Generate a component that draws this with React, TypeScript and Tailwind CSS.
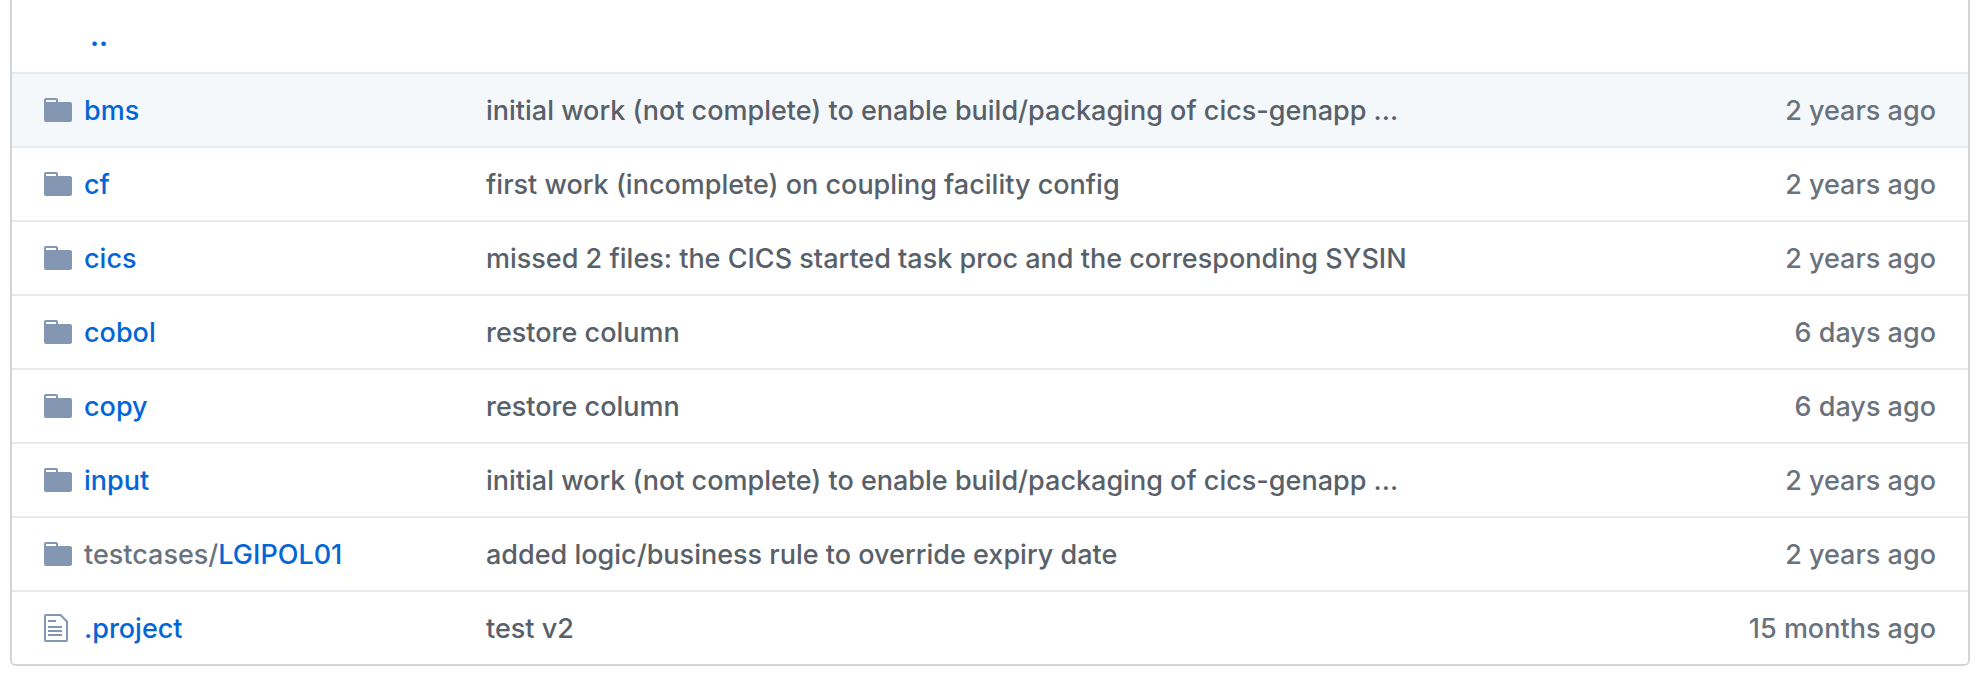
type Entry = {
  kind: 'directory' | 'file';
  name: string;
  prefix?: string;
  message: string;
  age: string;
  active?: boolean;
};

const entries: Entry[] = [
  {
    kind: 'directory',
    name: 'bms',
    message: 'initial work (not complete) to enable build/packaging of cics-genapp ...',
    age: '2 years ago',
    active: true,
  },
  {
    kind: 'directory',
    name: 'cf',
    message: 'first work (incomplete) on coupling facility config',
    age: '2 years ago',
  },
  {
    kind: 'directory',
    name: 'cics',
    message: 'missed 2 files: the CICS started task proc and the corresponding SYSIN',
    age: '2 years ago',
  },
  { kind: 'directory', name: 'cobol', message: 'restore column', age: '6 days ago' },
  { kind: 'directory', name: 'copy', message: 'restore column', age: '6 days ago' },
  {
    kind: 'directory',
    name: 'input',
    message: 'initial work (not complete) to enable build/packaging of cics-genapp ...',
    age: '2 years ago',
  },
  {
    kind: 'directory',
    prefix: 'testcases/',
    name: 'LGIPOL01',
    message: 'added logic/business rule to override expiry date',
    age: '2 years ago',
  },
  { kind: 'file', name: '.project', message: 'test v2', age: '15 months ago' },
];

function DirectoryIcon() {
  return (
    <svg viewBox="0 0 14 16" className="h-8 w-7 fill-current" role="img" aria-label="directory">
      <path
        fillRule="evenodd"
        d="M13 4H7V3c0-.66-.31-1-1-1H1c-.55 0-1 .45-1 1v10c0 .55.45 1 1 1h12c.55 0 1-.45 1-1V5c0-.55-.45-1-1-1zM6 4H1V3h5v1z"
      />
    </svg>
  );
}

function FileIcon() {
  return (
    <svg viewBox="0 0 12 16" className="h-8 w-6 fill-current" role="img" aria-label="file">
      <path
        fillRule="evenodd"
        d="M6 5H2V4h4v1zM2 8h7V7H2v1zm0 2h7V9H2v1zm0 2h7v-1H2v1zm10-7.5V14c0 .55-.45 1-1 1H1c-.55 0-1-.45-1-1V2c0-.55.45-1 1-1h7.5L12 4.5zM11 5L8 2H1v12h10V5z"
      />
    </svg>
  );
}

function EntryRow({ entry }: { entry: Entry }) {
  return (
    <tr className={entry.active ? 'bg-[#f4f8fb]' : 'bg-white'}>
      <td className="border-t-2 border-[#e7ebef] pl-8 text-[#6a737d]">
        <div className="flex h-[72px] items-center whitespace-nowrap">
          <span className="w-10 text-[#8397b2]">
            {entry.kind === 'directory' ? <DirectoryIcon /> : <FileIcon />}
          </span>
          <span className="pt-0.5">
            {entry.prefix}
            <a href="#" className="text-[#0366d6]">
              {entry.name}
            </a>
          </span>
        </div>
      </td>
      <td className="truncate border-t-2 border-[#e7ebef] pt-0.5 text-[#586069]">
        {entry.message}
      </td>
      <td className="border-t-2 border-[#e7ebef] pt-0.5 pr-8 text-right whitespace-nowrap text-[#6a737d]">
        {entry.age}
      </td>
    </tr>
  );
}

export default function App() {
  return (
    <main className="bg-white pr-3.5 pl-2.5 font-['Inter',sans-serif] text-[27px] leading-10 font-[450]">
      <div className="overflow-hidden rounded-b-md border-x-2 border-b-2 border-[#d1d5da]">
        <table className="w-full table-fixed border-separate border-spacing-0">
          <colgroup>
            <col className="w-[474px]" />
            <col />
            <col className="w-60" />
          </colgroup>
          <tbody>
            <tr>
              <td colSpan={3} className="h-[72px] pt-0.5 pl-[78px]">
                <a href="#" aria-label="Parent directory" className="font-bold text-[#0366d6]">
                  ..
                </a>
              </td>
            </tr>
            {entries.map((entry) => (
              <EntryRow key={entry.name} entry={entry} />
            ))}
          </tbody>
        </table>
      </div>
    </main>
  );
}
